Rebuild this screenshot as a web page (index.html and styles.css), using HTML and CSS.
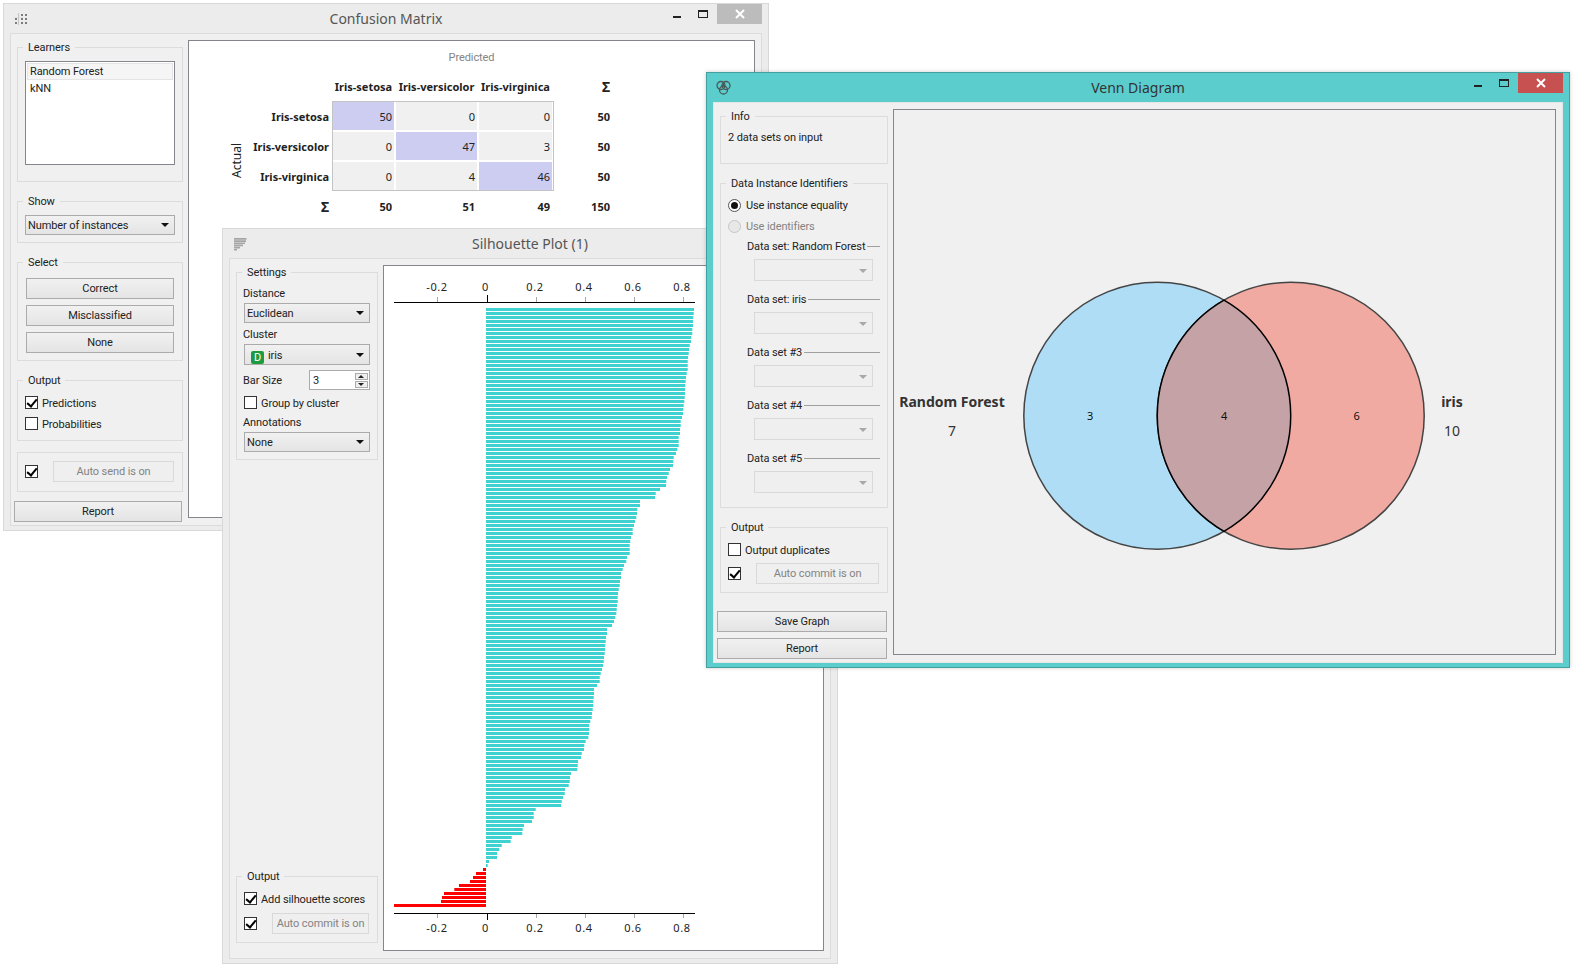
FILE: index.html

```html
<!DOCTYPE html>
<html lang="en">
<head>
    <meta charset="UTF-8">
    <title>Orange widgets</title>
    <link rel="stylesheet" href="styles.css">
</head>
<body>

<!-- Confusion Matrix -->
<div class="window win-confusion">
    <div class="titlebar">
        <svg class="win-icon" width="14" height="14" viewBox="0 0 14 14">
            <path d="M0 5h9v1H0z" fill="#e2e2e2"/>
            <path d="M4 1h1v12H4z" fill="#c4c4c4"/>
            <path d="M7 2h2v2H7zM11 2h2v2h-2zM1 6h2v2H1zM7 6h2v2H7zM11 6h2v2h-2zM1 10h2v2H1zM7 10h2v2H7zM11 10h2v2h-2z" fill="#7c7c7c"/>
        </svg>
        <div class="title">Confusion Matrix</div>
        <div class="controls">
            <span class="ctl"><i class="ctl-min"></i></span>
            <span class="ctl"><i class="ctl-max"></i></span>
            <span class="ctl-close">
                <svg width="10" height="10" viewBox="0 0 10 10"><path d="M1 1l8 8M9 1l-8 8" stroke="#fff" stroke-width="2"/></svg>
            </span>
        </div>
    </div>
    <div class="frame">
        <div class="sidebar side-confusion">
            <fieldset class="group h-learners">
                <legend>Learners</legend>
                <div class="listbox">
                    <div class="list-item selected">Random Forest</div>
                    <div class="list-item">kNN</div>
                </div>
            </fieldset>
            <fieldset class="group h-show">
                <legend>Show</legend>
                <div class="combo">Number of instances</div>
            </fieldset>
            <fieldset class="group h-select">
                <legend>Select</legend>
                <div class="btn btn-select first">Correct</div>
                <div class="btn btn-select">Misclassified</div>
                <div class="btn btn-select">None</div>
            </fieldset>
            <fieldset class="group h-output">
                <legend>Output</legend>
                <div class="check-row"><span class="check on"></span>Predictions</div>
                <div class="check-row second"><span class="check"></span>Probabilities</div>
            </fieldset>
            <div class="group autobox">
                <span class="check on"></span>
                <div class="btn disabled auto-send">Auto send is on</div>
            </div>
            <div class="btn btn-report">Report</div>
        </div>
        <div class="matrix">
            <div class="predicted">Predicted</div>
            <div class="cm">
                <div class="cm-actual">Actual</div>

                <div class="cm-col col-1">Iris-setosa</div>
                <div class="cm-col col-2">Iris-versicolor</div>
                <div class="cm-col col-3">Iris-virginica</div>
                <div class="cm-col col-4 sum sum-sign">&Sigma;</div>

                <div class="cm-row row-1">Iris-setosa</div>
                <div class="cell hit col-1 row-1">50</div>
                <div class="cell col-2 row-1">0</div>
                <div class="cell col-3 row-1">0</div>
                <div class="sum col-4 row-1">50</div>

                <div class="cm-row row-2">Iris-versicolor</div>
                <div class="cell col-1 row-2">0</div>
                <div class="cell hit col-2 row-2">47</div>
                <div class="cell col-3 row-2">3</div>
                <div class="sum col-4 row-2">50</div>

                <div class="cm-row row-3">Iris-virginica</div>
                <div class="cell col-1 row-3">0</div>
                <div class="cell col-2 row-3">4</div>
                <div class="cell hit col-3 row-3">46</div>
                <div class="sum col-4 row-3">50</div>

                <div class="cm-row row-4 sum-sign">&Sigma;</div>
                <div class="sum col-1 row-4">50</div>
                <div class="sum col-2 row-4">51</div>
                <div class="sum col-3 row-4">49</div>
                <div class="sum col-4 row-4">150</div>

                <div class="cm-frame"></div>
            </div>
        </div>
    </div>
</div>

<!-- Silhouette Plot -->
<div class="window win-silhouette">
    <div class="titlebar">
        <svg class="win-icon" width="14" height="14" viewBox="0 0 14 14">
            <path d="M1 1h12.500v1.700H1zM1 3.200h12v1.700H1zM1 5.400h11v1.700H1zM1 7.600h9v1.700H1zM1 9.800h6v1.700H1zM1 12h3v1.500H1z" fill="#a5a5a5"/>
        </svg>
        <div class="title">Silhouette Plot (1)</div>
        <div class="controls"></div>
    </div>
    <div class="frame">
        <div class="sidebar side-silhouette">
            <fieldset class="group tight h-settings">
                <legend>Settings</legend>
                <div class="field-label first">Distance</div>
                <div class="combo combo-field">Euclidean</div>
                <div class="field-label">Cluster</div>
                <div class="combo combo-field combo-tall"><span class="badge">D</span>iris</div>
                <div class="bar-size">
                    <span>Bar Size</span>
                    <div class="spin">
                        <span class="spin-val">3</span>
                        <span class="spin-arrows"><i class="up"></i><i class="down"></i></span>
                    </div>
                </div>
                <div class="check-row group-check"><span class="check"></span>Group by cluster</div>
                <div class="field-label annot">Annotations</div>
                <div class="combo combo-field">None</div>
            </fieldset>
            <fieldset class="group tight h-sil-output">
                <legend>Output</legend>
                <div class="check-row sil-check"><span class="check on"></span>Add silhouette scores</div>
                <div class="commit-row sil-commit">
                    <span class="check on"></span>
                    <div class="btn disabled auto-sil">Auto commit is on</div>
                </div>
            </fieldset>
        </div>
        <div class="plot">
            <svg id="silhouette" width="439" height="683" viewBox="384 266 439 683">
                <g class="axis-text">
                    <text x="437" y="291">-0.2</text>
                    <text x="485.500" y="291">0</text>
                    <text x="535" y="291">0.2</text>
                    <text x="584" y="291">0.4</text>
                    <text x="633" y="291">0.6</text>
                    <text x="682" y="291">0.8</text>
                    <text x="437" y="932">-0.2</text>
                    <text x="485.500" y="932">0</text>
                    <text x="535" y="932">0.2</text>
                    <text x="584" y="932">0.4</text>
                    <text x="633" y="932">0.6</text>
                    <text x="682" y="932">0.8</text>
                </g>
                <path d="M394 302.500h301M394 913.500h301" stroke="#000" fill="none"/>
                <path d="M437.500 297v5M536.500 297v5M585.500 297v5M634.500 297v5M683.500 297v5M437.500 914v4M536.500 914v4M585.500 914v4M634.500 914v4M683.500 914v4" stroke="#a8a8a8" fill="none"/>
                <path d="M487.500 295v7M487.500 914v6" stroke="#000" fill="none"/>
                <g id="bars"></g>
            </svg>
        </div>
    </div>
</div>

<!-- Venn Diagram -->
<div class="window win-venn">
    <div class="titlebar">
        <svg class="win-icon venn-icon" width="15" height="15" viewBox="0 0 15 15">
            <g fill="none" stroke="#4a5a5a" stroke-width="1.300">
                <circle cx="5" cy="5.500" r="4"/>
                <circle cx="10" cy="5.500" r="4"/>
                <circle cx="7.500" cy="10" r="4"/>
            </g>
            <path d="M7.500 2.800l2.300 4.400H5.200z" fill="#4a5a5a"/>
        </svg>
        <div class="title">Venn Diagram</div>
        <div class="controls">
            <span class="ctl"><i class="ctl-min"></i></span>
            <span class="ctl"><i class="ctl-max"></i></span>
            <span class="ctl-close red">
                <svg width="10" height="10" viewBox="0 0 10 10"><path d="M1 1l8 8M9 1l-8 8" stroke="#fff" stroke-width="2"/></svg>
            </span>
        </div>
    </div>
    <div class="frame">
        <div class="sidebar side-venn">
            <fieldset class="group wide h-info">
                <legend>Info</legend>
                <div class="info-text">2 data sets on input</div>
            </fieldset>
            <fieldset class="group wide h-ident">
                <legend>Data Instance Identifiers</legend>
                <div class="radio-row"><span class="radio on"></span>Use instance equality</div>
                <div class="radio-row off"><span class="radio"></span>Use identifiers</div>
                <div class="ds-label first">Data set: Random Forest</div>
                <div class="combo disabled ds-combo"></div>
                <div class="ds-label">Data set: iris</div>
                <div class="combo disabled ds-combo"></div>
                <div class="ds-label">Data set #3</div>
                <div class="combo disabled ds-combo"></div>
                <div class="ds-label">Data set #4</div>
                <div class="combo disabled ds-combo"></div>
                <div class="ds-label">Data set #5</div>
                <div class="combo disabled ds-combo"></div>
            </fieldset>
            <fieldset class="group wide h-venn-output">
                <legend>Output</legend>
                <div class="check-row venn-check"><span class="check"></span>Output duplicates</div>
                <div class="commit-row venn-commit">
                    <span class="check on"></span>
                    <div class="btn disabled auto-venn">Auto commit is on</div>
                </div>
            </fieldset>
            <div class="btn btn-venn save">Save Graph</div>
            <div class="btn btn-venn">Report</div>
        </div>
        <div class="plot venn-plot">
            <svg width="661" height="543" viewBox="894 110 661 543">
                <circle cx="1157.300" cy="415.700" r="133.500" fill="#aeddf5" stroke="#444" stroke-width="1.500"/>
                <circle cx="1290.700" cy="415.700" r="133.500" fill="#f1aaa2" stroke="#444" stroke-width="1.500"/>
                <path d="M1224 300.100A133.500 133.500 0 0 1 1224 531.300A133.500 133.500 0 0 1 1224 300.100z" fill="#c5a2a6" stroke="#000" stroke-width="1.500"/>
                <text class="venn-name" x="952" y="407">Random Forest</text>
                <text class="venn-count" x="952" y="436">7</text>
                <text class="venn-name" x="1452" y="407">iris</text>
                <text class="venn-count" x="1452" y="436">10</text>
                <text class="venn-area" x="1090" y="420">3</text>
                <text class="venn-area" x="1224" y="420">4</text>
                <text class="venn-area" x="1356.500" y="420">6</text>
            </svg>
        </div>
    </div>
</div>

<script src="plot.js"></script>
</body>
</html>
```

FILE: styles.css

```css
* {
    box-sizing: border-box;
}
body {
    margin: 0;
    background-color: white;
    font-family: Roboto, "Noto Sans", sans-serif;
    font-size: 11px;
    letter-spacing: -0.1px;
    color: #222;
    overflow: hidden;
}

/* windows sit on a free desktop */
.window {
    position: absolute;
    display: flex;
    flex-direction: column;
    padding: 0 6px 4px;
    border: 1px solid #d8d8d8;
    background-color: #ececec;
}
.win-confusion {
    left: 3px;
    top: 3px;
    width: 766px;
    height: 528px;
}
.win-silhouette {
    left: 222px;
    top: 228px;
    width: 616px;
    height: 736px;
}
.win-venn {
    left: 706px;
    top: 72px;
    width: 864px;
    height: 596px;
    border-color: #459f9f;
    background-color: #5bcdcd;
    box-shadow: 0 0 4px rgba(0, 0, 0, 0.2);
}
.titlebar {
    display: grid;
    grid-template-columns: 1fr auto 1fr;
    align-items: center;
    height: 29px;
    flex-shrink: 0;
}
.win-icon {
    margin-left: 4px;
}
.venn-icon {
    margin-left: 3px;
}
.title {
    padding-bottom: 1px;
    font-family: "Noto Sans", sans-serif;
    font-size: 14px;
    letter-spacing: 0;
    color: #555;
}
.win-venn .title {
    color: #333;
}
.controls {
    display: flex;
    justify-content: flex-end;
    align-self: start;
}
.ctl {
    display: flex;
    align-items: center;
    justify-content: center;
    width: 26px;
    height: 20px;
}
.ctl-min {
    width: 8px;
    height: 2px;
    margin-top: 6px;
    background-color: #222;
}
.ctl-max {
    width: 10px;
    height: 8px;
    border: 1px solid #222;
    border-top-width: 2px;
}
.ctl-close {
    display: flex;
    align-items: center;
    justify-content: center;
    width: 45px;
    height: 20px;
    margin-left: 1px;
    background-color: #bcbcbc;
}
.ctl-close.red {
    background-color: #c75050;
}
.frame {
    flex: 1;
    display: flex;
    min-height: 0;
    padding: 6px 6px 7px 3px;
    border: 1px solid #dcdcdc;
    background-color: #f0f0f0;
}
.win-venn .frame {
    border-color: #e6e6e6;
}

/* side panels */
.sidebar {
    display: flex;
    flex-direction: column;
    flex-shrink: 0;
}
.sidebar > * {
    flex-shrink: 0;
}
.side-confusion {
    width: 169px;
    margin-right: 5px;
    gap: 12px;
}
.side-confusion .group {
    width: 166px;
    margin-left: 3px;
}
.side-silhouette {
    width: 142px;
    margin-left: 3px;
    margin-right: 5px;
    padding-bottom: 8px;
    justify-content: space-between;
}
.side-venn {
    width: 170px;
    margin-right: 6px;
    gap: 12px;
}
.side-venn .wide {
    width: 168px;
    margin-left: 3px;
}
.group {
    margin: 0;
    min-width: 0;
    padding: 7px;
    border: 1px solid #dcdcdc;
}
.group legend {
    margin-left: -2px;
    padding: 2px 5px 0;
    line-height: 12px;
}
.group.tight {
    padding: 0 6px;
}
.group.tight legend {
    margin-left: -1px;
}
.h-learners { height: 142px; }
.h-show { height: 49px; }
.h-select { height: 106px; }
.h-output {
    height: 68px;
    padding-top: 6px;
}
.h-settings { height: 195px; }
.h-sil-output { height: 74px; }
.h-info { height: 55px; }
.h-ident { height: 332px; }
.h-venn-output { height: 73px; }

.listbox {
    height: 104px;
    padding: 1px 1px 2px;
    border: 1px solid #85858c;
    background-color: white;
}
.list-item {
    height: 17px;
    padding-left: 3px;
    line-height: 18px;
}
.list-item.selected {
    border: 1px solid #e4e4e4;
    background-color: #f5f5f5;
    padding-left: 2px;
    line-height: 16px;
}
.combo {
    position: relative;
    height: 20px;
    padding-left: 2px;
    line-height: 20px;
    border: 1px solid #ababab;
    background: linear-gradient(#f1f1f1, #e4e4e4);
}
.combo::after {
    content: "";
    position: absolute;
    right: 5px;
    top: 7px;
    border-left: 4px solid transparent;
    border-right: 4px solid transparent;
    border-top: 4px solid #111;
}
.combo.disabled {
    background: #efefef;
    border-color: #d9d9d9;
}
.combo.disabled::after {
    top: 9px;
    border-top-color: #a8a8a8;
}
.combo-field {
    width: 126px;
    margin-top: 2px;
    margin-left: 1px;
}
.combo-tall {
    height: 21px;
    padding-left: 6px;
    line-height: 21px;
}
.combo-tall::after {
    top: 8px;
}
.badge {
    display: inline-block;
    width: 13px;
    height: 13px;
    margin-right: 4px;
    border-radius: 2px;
    background-color: #1c9c3c;
    color: white;
    text-align: center;
    line-height: 13px;
    vertical-align: -2px;
}
.btn {
    height: 21px;
    text-align: center;
    line-height: 19px;
    border: 1px solid #ababab;
    background: linear-gradient(#f1f1f1, #e4e4e4);
}
.btn.disabled {
    background: #efefef;
    border-color: #d9d9d9;
    color: #838383;
}
.btn-select {
    width: 148px;
    margin: 6px 0 0 1px;
}
.btn-select.first {
    margin-top: 2px;
}
.btn-report {
    width: 168px;
    margin-top: -3px;
}
.btn-venn {
    margin-top: -6px;
    width: 170px;
}
.btn-venn.save {
    margin-top: 6px;
}

.check {
    position: relative;
    flex-shrink: 0;
    width: 13px;
    height: 13px;
    border: 1px solid #333;
    background-color: white;
}
.check.on::after {
    content: "";
    position: absolute;
    left: 3px;
    top: 0;
    width: 4px;
    height: 8px;
    border-right: 2px solid #000;
    border-bottom: 2px solid #000;
    transform: rotate(40deg);
}
.check-row {
    display: flex;
    align-items: center;
    gap: 4px;
    height: 19px;
    padding-top: 2px;
    white-space: nowrap;
}
.check-row .check {
    margin-top: -2px;
}
.check-row.second {
    margin-top: 2px;
}
.autobox {
    display: flex;
    align-items: center;
    height: 40px;
    margin-top: -1px;
    padding: 8px 7px 9px;
}
.auto-send {
    width: 121px;
    margin-left: 15px;
}

/* silhouette settings */
.field-label {
    height: 16px;
    margin-top: 3px;
    line-height: 18px;
}
.field-label.first {
    margin-top: 6px;
}
.field-label.annot {
    margin-top: 4px;
}
.bar-size {
    display: flex;
    align-items: center;
    justify-content: space-between;
    width: 127px;
    height: 20px;
    margin-top: 5px;
}
.spin {
    display: flex;
    align-items: center;
    justify-content: space-between;
    width: 61px;
    height: 20px;
    padding: 1px 1px 1px 3px;
    border: 1px solid #ababab;
    background-color: white;
}
.spin-arrows {
    display: flex;
    flex-direction: column;
    gap: 1px;
}
.spin-arrows i {
    position: relative;
    display: block;
    width: 13px;
    height: 7px;
    border: 1px solid #ababab;
    background-color: #efefef;
}
.spin-arrows i::after {
    content: "";
    position: absolute;
    left: 2px;
    border-left: 3px solid transparent;
    border-right: 3px solid transparent;
}
.spin-arrows .up::after {
    top: 1px;
    border-bottom: 3px solid #222;
}
.spin-arrows .down::after {
    top: 1px;
    border-top: 3px solid #222;
}
.group-check {
    height: 15px;
    margin-top: 5px;
    margin-left: 1px;
    gap: 4px;
}
.sil-check {
    margin-top: 6px;
    margin-left: 1px;
}
.commit-row {
    display: flex;
    align-items: center;
}
.sil-commit {
    margin-top: 5px;
    margin-left: 1px;
}
.auto-sil {
    width: 97px;
    margin-left: 15px;
}

/* venn panel */
.info-text {
    line-height: 16px;
}
.radio-row {
    display: flex;
    align-items: center;
    gap: 5px;
    height: 19px;
    margin-top: -1px;
}
.radio-row.off {
    margin-top: 2px;
    color: #838383;
}
.radio {
    position: relative;
    width: 13px;
    height: 13px;
    border: 1px solid #c6c6c6;
    border-radius: 50%;
    background-color: #e8e8e8;
}
.radio.on {
    border-color: #555;
    background-color: white;
}
.radio.on::after {
    content: "";
    position: absolute;
    left: 2px;
    top: 2px;
    width: 7px;
    height: 7px;
    border-radius: 50%;
    background-color: #111;
}
.ds-label {
    display: flex;
    align-items: center;
    gap: 2px;
    height: 16px;
    margin: 10px 0 0 19px;
}
.ds-label.first {
    margin-top: 2px;
}
.ds-label::after {
    content: "";
    flex: 1;
    height: 1px;
    background-color: #a0a0a0;
}
.ds-combo {
    width: 119px;
    height: 22px;
    margin: 5px 0 0 26px;
}
.venn-check {
    margin-top: -1px;
}
.venn-commit {
    margin-top: 4px;
}
.auto-venn {
    width: 123px;
    margin-left: 15px;
}

/* confusion matrix */
.matrix {
    flex: 1;
    border: 1px solid #85858c;
    background-color: white;
}
.predicted {
    height: 31px;
    text-align: center;
    line-height: 34px;
    color: #838383;
}
.cm {
    display: grid;
    grid-template-columns: 18px 84px 61px 81px 73px 56px;
    grid-auto-rows: 28px;
    gap: 2px;
    padding-left: 38px;
    font-family: "Noto Sans", sans-serif;
    letter-spacing: 0;
}
.col-1 { grid-column: 3; }
.col-2 { grid-column: 4; }
.col-3 { grid-column: 5; }
.col-4 { grid-column: 6; }
.row-1 { grid-row: 2; }
.row-2 { grid-row: 3; }
.row-3 { grid-row: 4; }
.row-4 { grid-row: 5; }
.cm-col {
    grid-row: 1;
    font-weight: bold;
    text-align: center;
    line-height: 30px;
    white-space: nowrap;
}
.cm-row {
    grid-column: 2;
    padding-right: 2px;
    font-weight: bold;
    text-align: right;
    line-height: 30px;
    white-space: nowrap;
}
.cell {
    padding-right: 2px;
    text-align: right;
    line-height: 30px;
    background-color: #f0f0f0;
}
.cell.hit {
    background-color: #cdcdf1;
}
.sum {
    padding-right: 2px;
    font-weight: bold;
    text-align: right;
    line-height: 30px;
}
.col-4.sum {
    padding-right: 0;
}
.sum-sign {
    font-size: 14px;
}
.cm-frame {
    grid-column: 3 / 6;
    grid-row: 2 / 5;
    margin: -1px -2px -1px -1px;
    border: 1px solid #c4c4c4;
}
.cm-actual {
    grid-column: 1;
    grid-row: 3 / 5;
    justify-self: center;
    align-self: center;
    font-size: 12px;
    writing-mode: vertical-rl;
    transform: rotate(180deg);
}

/* plots */
.plot {
    flex: 1;
    border: 1px solid #85858c;
    background-color: white;
}
.plot svg {
    display: block;
}
.venn-plot {
    background-color: #f0f0f0;
}
.axis-text text {
    font-family: "Noto Sans", sans-serif;
    font-size: 11px;
    letter-spacing: 0.6px;
    text-anchor: middle;
    fill: #222;
}
.venn-name {
    font-family: "Noto Sans", sans-serif;
    font-size: 14px;
    font-weight: bold;
    letter-spacing: 0;
    text-anchor: middle;
    fill: #333;
}
.venn-count {
    font-family: "Noto Sans", sans-serif;
    font-size: 14px;
    letter-spacing: 0;
    text-anchor: middle;
    fill: #333;
}
.venn-area {
    font-family: "Noto Sans", sans-serif;
    font-size: 11px;
    text-anchor: middle;
    fill: #111;
}
```

FILE: plot.js

```js
// bar lengths in px, sorted as the plot sorts the silhouette scores
var positive = [
    208, 207.7, 207.3, 207, 207, 206.3, 206.3, 205.3, 205, 203.7, 203, 202.7, 202, 201.7, 201.7, 201.7,
    200.7, 200, 199.7, 199.3, 199, 199, 198.7, 198.3, 197.7, 197.3, 197, 196, 194.7, 194.7, 194, 194,
    192.7, 192.7, 192.7, 191.3, 190, 187.7, 187.3, 187, 184, 182.7, 181, 180.3, 180, 174, 169.7, 169,
    154, 154, 151.3, 151, 150.3, 149, 148, 146.7, 146.7, 145, 144.3, 143.7, 143.7, 143.7,
    141, 140.3, 138, 136.7, 135, 135, 134, 133.7, 132.7, 132, 131.7, 131.7, 131, 130.7, 130.3, 129.3,
    128, 126, 121, 121, 120, 119.7, 119.3, 119, 118.7, 118, 117.7, 117, 116, 114.7, 113.7, 113.7,
    111, 108, 108, 107.7, 107.3, 107.3, 106.7, 106, 105.7, 104.3, 103.3, 103.3, 103, 102.3, 99.7, 98.3,
    98, 95.7, 95, 92, 91.7, 91.3, 85, 84, 83.7, 82.7, 79, 78.7, 77, 75.7, 75, 49.7,
    47.7, 47.7, 46, 38, 36.7, 36.3, 25.7, 24.7, 15.7, 13.3, 11, 11, 3, 1.7
];
var negative = [3, 10, 13, 16, 27, 31.7, 42, 44, 45, 92];

var svgNs = 'http://www.w3.org/2000/svg';
var barsGroup = document.getElementById('bars');
var zeroX = 486;
var firstY = 308;

function addBar(x, y, width, color) {
    var bar = document.createElementNS(svgNs, 'rect');
    bar.setAttribute('x', x);
    bar.setAttribute('y', y);
    bar.setAttribute('width', width);
    bar.setAttribute('height', 3);
    bar.setAttribute('fill', color);
    barsGroup.appendChild(bar);
}

positive.forEach(function (width, i) {
    addBar(zeroX, firstY + i * 4, width, '#40d1d1');
});
negative.forEach(function (width, i) {
    addBar(zeroX - width, firstY + (positive.length + i) * 4, width, '#ff0000');
});
```
